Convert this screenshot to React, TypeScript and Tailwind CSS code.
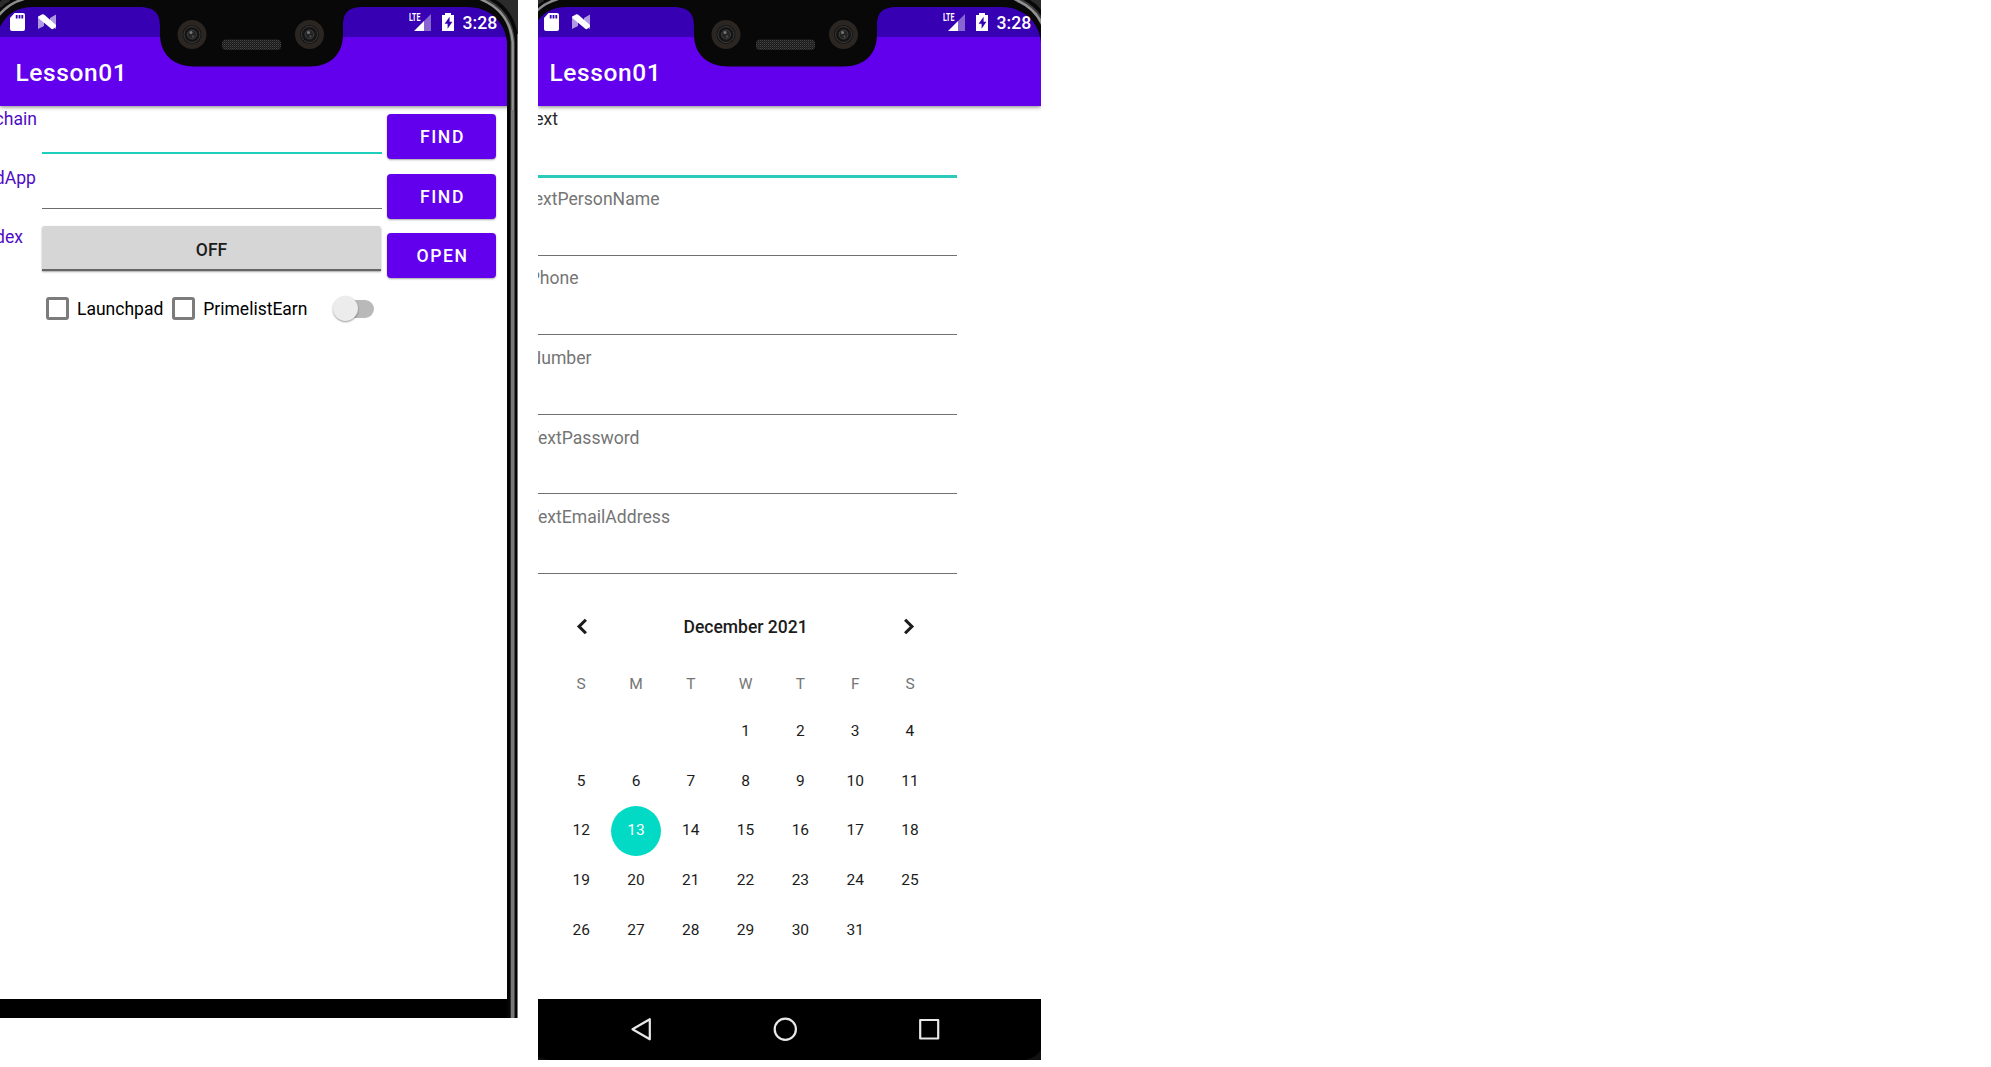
import { ChevronLeft, ChevronRight } from "lucide-react";

const WEEKDAYS = ["S", "M", "T", "W", "T", "F", "S"];
const DAYS: (number | null)[] = [null, null, null, ...Array.from({ length: 31 }, (_, i) => i + 1)];
const FIELDS = ["ext", "extPersonName", "Phone", "Number", "TextPassword", "TextEmailAddress"];
const LABEL_WIDTHS = [20, 121.5, 40.5, 53.5, 101.5, 132];

function StatusIcons() {
  return (
    <g>
      <path d="M14.5 13H23q2 0 2 2V29q0 2-2 2H12q-2 0-2-2V18z" fill="#fff" />
      <path d="M15.8 15h1.8v3.5h-1.8zM18.6 15h1.8v3.5h-1.8zM21.4 15h1.8v3.5h-1.8z" fill="#3700b3" />
      <path d="M38 16l6 4v6l-6 3zM56 14.5V29l-6-3v-8z" fill="#fff" opacity=".6" />
      <path d="M38.3 16.5l4-2.2q1-.4 2 .4L56 25v1.5l-3 2.5q-1 .4-2-.4L38.3 18z" fill="#fff" />
      <path d="M431 14v17h-7V21z" fill="#fff" opacity=".4" />
      <path d="M424 21v10h-10z" fill="#fff" />
      <path d="M442 15h3v-2h6v2h3v16h-12z" fill="#fff" />
      <path d="M449.6 16.8l-5 7h3v5l4.8-7h-2.8z" fill="#3700b3" />
    </g>
  );
}

function Camera({ x }: { x: number }) {
  return (
    <g transform={`translate(${x} 34.5)`}>
      <circle r="14.5" fill="#2c2622" />
      <circle r="9.5" fill="#141414" />
      <circle r="8" fill="none" stroke="#3b3b3b" strokeWidth="1" />
      <circle r="4.5" fill="#252525" stroke="#484848" strokeWidth=".8" />
      <circle cx="-1" cy="-2" r="1.5" fill="#777" />
      <circle cx="1" cy="2" r="1" fill="#555" />
    </g>
  );
}

function Bezel({ shift, width }: { shift: number; width: number }) {
  return (
    <svg className="absolute left-0 top-0" width={width} height="110" viewBox={`${shift} 0 ${width} 110`}>
      <defs>
        <pattern id={`mesh${shift}`} width="2" height="2" patternUnits="userSpaceOnUse">
          <rect width="2" height="2" fill="#1c1c1c" />
          <rect width="1" height="1" fill="#444" />
          <rect x="1" y="1" width="1" height="1" fill="#2c2c2c" />
        </pattern>
      </defs>
      <path
        d="M0 0H518V110H507V42C505 22 490 7 467 7H363C348 7 343 13 343 26V34C343 54 331 66.5 309 66.5H195C173 66.5 160 54 160 34V26C160 13 154 7 139 7H33C18 7 7 13 0 27z"
        fill="#080808"
      />
      <path d="M-1 15Q9 3 24 -1" fill="none" stroke="#8d8d8d" strokeWidth="2.4" />
      <path d="M-1 6Q4 1 9 -1" fill="none" stroke="#2c2c2c" strokeWidth="5" />
      <path d="M494 -1C506 5 516 18 518 38V-1z" fill="#2b2b2b" />
      <path d="M482 -1Q511 11 512.7 42V110" fill="none" stroke="#3b3b3b" strokeWidth="4.5" />
      <path d="M480 -1Q510 11 512.7 42V110" fill="none" stroke="#929292" strokeWidth="2.4" />
      <path d="M517.5 34V110" stroke="#777" />
      <Camera x={192} />
      <Camera x={309.5} />
      <rect x="222" y="39.5" width="59" height="10.5" rx="4" fill={`url(#mesh${shift})`} />
      <StatusIcons />
    </svg>
  );
}

function Header({ shift, width }: { shift: number; width: number }) {
  return (
    <header className="relative h-[106px] shrink-0 bg-[#6200ee] shadow-[0_1px_4px_rgba(0,0,0,0.5)]">
      <div className="h-[37px] bg-[#3700b3]" />
      <Bezel shift={shift} width={width} />
      <div className="absolute right-0 top-[12px] flex items-start text-white" style={{ left: 409 - shift }}>
        <span className="w-[53.5px] origin-left scale-x-[0.64] text-[11px] font-bold leading-[11px]">LTE</span>
        <span className="text-[17.6px] font-medium leading-[22px]">3:28</span>
      </div>
      <h1
        className="absolute top-[58px] text-[24.5px] font-medium leading-[30px] tracking-[0.6px] text-white"
        style={{ left: 15.5 - shift }}
      >
        Lesson01
      </h1>
    </header>
  );
}

function RowLabel({ text }: { text: string }) {
  return (
    <div className="flex w-[37px] shrink-0 justify-end overflow-hidden text-[17.6px] leading-6 text-[#4f0bc4]">{text}</div>
  );
}

function ActionButton({ text }: { text: string }) {
  return (
    <button className="ml-auto mr-[11px] mt-[7px] h-[45px] w-[109px] rounded-[4px] bg-[#6200ee] pl-[2px] text-[17.6px] font-medium leading-[46px] tracking-[1.6px] text-white shadow-[0_1px_2px_rgba(0,0,0,0.35)]">
      {text}
    </button>
  );
}

function CheckOption({ text }: { text: string }) {
  return (
    <label className="flex items-center gap-2">
      <span className="size-[23px] rounded-[3px] border-[3px] border-[#7c7c7c]" />
      <span className="text-[17.5px] leading-6 text-black">{text}</span>
    </label>
  );
}

function FirstPhone() {
  return (
    <section className="relative flex h-[1018px] w-[518px] shrink-0 flex-col overflow-hidden">
      <Header shift={0} width={518} />
      <div className="flex flex-1 overflow-hidden">
        <main className="flex w-[507px] flex-col pt-[1px]">
          <div className="flex h-[60px] items-start">
            <RowLabel text="chain" />
            <div className="ml-[5px] mt-[45px] h-[2px] w-[340px] bg-[#1fcfbd]" />
            <ActionButton text="FIND" />
          </div>
          <div className="flex h-[59px] items-start">
            <div className="-ml-px -mt-px">
              <RowLabel text="dApp" />
            </div>
            <div className="ml-[6px] mt-[41px] h-px w-[340px] bg-[#6c6c6c]" />
            <ActionButton text="FIND" />
          </div>
          <div className="flex h-[59px] items-start">
            <div className="-ml-[14px] -mt-px">
              <RowLabel text="dex" />
            </div>
            <div className="ml-[19px] h-[45px] w-[339px] rounded-t-[3px] border-b-2 border-[#666] bg-[#d6d6d6] text-center text-[17.5px] font-medium leading-[48px] text-[#1c1c1c] shadow-[0_1px_2px_rgba(0,0,0,0.35)]">
              OFF
            </div>
            <ActionButton text="OPEN" />
          </div>
          <div className="ml-[46px] mt-[10px] flex h-[27px] items-center">
            <CheckOption text="Launchpad" />
            <div className="ml-[9px]">
              <CheckOption text="PrimelistEarn" />
            </div>
            <div className="ml-auto mr-[133px] flex h-[18px] w-[39px] items-center rounded-full bg-[#b9b9b9]">
              <span className="-ml-[2px] size-[25px] shrink-0 rounded-full bg-[#ececec] shadow-[0_1px_2px_rgba(0,0,0,0.4)]" />
            </div>
          </div>
          <div className="mt-auto h-[19px] bg-black" />
        </main>
        <div className="flex w-[11px]">
          <div className="w-[3px] bg-[#050505]" />
          <div className="w-px bg-[#2b2b2b]" />
          <div className="w-[3px] bg-[#777]" />
          <div className="w-px bg-[#444]" />
          <div className="w-[2px] bg-[#050505]" />
          <div className="w-px bg-[#777]" />
        </div>
      </div>
    </section>
  );
}

function Calendar() {
  return (
    <div className="ml-[15.8px] w-[383.6px] text-[#1c1c1c]">
      <div className="mt-[17px] flex h-[50px] items-center justify-between px-[15px]">
        <ChevronLeft size={27} strokeWidth={2.8} strokeLinecap="butt" strokeLinejoin="miter" />
        <span className="pt-px text-[17.5px] font-medium">December 2021</span>
        <ChevronRight size={27} strokeWidth={2.8} strokeLinecap="butt" strokeLinejoin="miter" />
      </div>
      <div className="mt-[19px] grid grid-cols-7 text-center text-[15.5px] leading-[26px] text-[#757575]">
        {WEEKDAYS.map((d, i) => (
          <span key={i}>{d}</span>
        ))}
      </div>
      <div className="mt-[10px] grid grid-cols-7 justify-items-center text-[15.5px]">
        {DAYS.map((d, i) => (
          <span
            key={i}
            className={
              d === 13
                ? "flex h-[49.75px] w-[50px] items-center justify-center rounded-full bg-[#03dac5] text-white"
                : "flex h-[49.75px] w-[50px] items-center justify-center"
            }
          >
            {d}
          </span>
        ))}
      </div>
    </div>
  );
}

function SecondPhone() {
  return (
    <section className="relative ml-[20px] flex h-[1060px] w-[503px] shrink-0 flex-col overflow-hidden">
      <Header shift={4} width={503} />
      <main className="flex-1 overflow-hidden pt-[1px]">
        {FIELDS.map((f, i) => (
          <div key={f} className="h-[79.6px] w-[419px]">
            <div
              className={
                i === 0
                  ? "flex h-[68px] items-start justify-end overflow-hidden text-[17.6px] leading-6 text-[#2b2b2b]"
                  : "flex h-[68px] items-start justify-end overflow-hidden pt-[0.3px] text-[17.6px] leading-6 text-[#757575]"
              }
              style={{ width: LABEL_WIDTHS[i] }}
            >
              {f}
            </div>
            <div className={i === 0 ? "h-[3px] bg-[#2bcbbb]" : "h-px bg-[#707070]"} />
          </div>
        ))}
        <Calendar />
      </main>
      <nav className="flex h-[61px] shrink-0 items-center bg-black">
        <svg width="503" height="61" viewBox="0 0 503 61" fill="none" stroke="#e8e8e8" strokeWidth="2.2" strokeLinejoin="round">
          <path d="M111.8 20.2V40.3L94.5 30.3z" />
          <circle cx="247.3" cy="30.3" r="10.6" />
          <rect x="382.2" y="21" width="18" height="18.5" />
          <path d="M0 58Q5 60 10 61H0zM503 50Q499 58 488 61H503z" fill="#111" stroke="none" />
        </svg>
      </nav>
    </section>
  );
}

export default function App() {
  return (
    <div className="flex h-[1067px] w-[1991px] items-start overflow-hidden bg-white font-['Roboto',sans-serif]">
      <FirstPhone />
      <SecondPhone />
    </div>
  );
}
